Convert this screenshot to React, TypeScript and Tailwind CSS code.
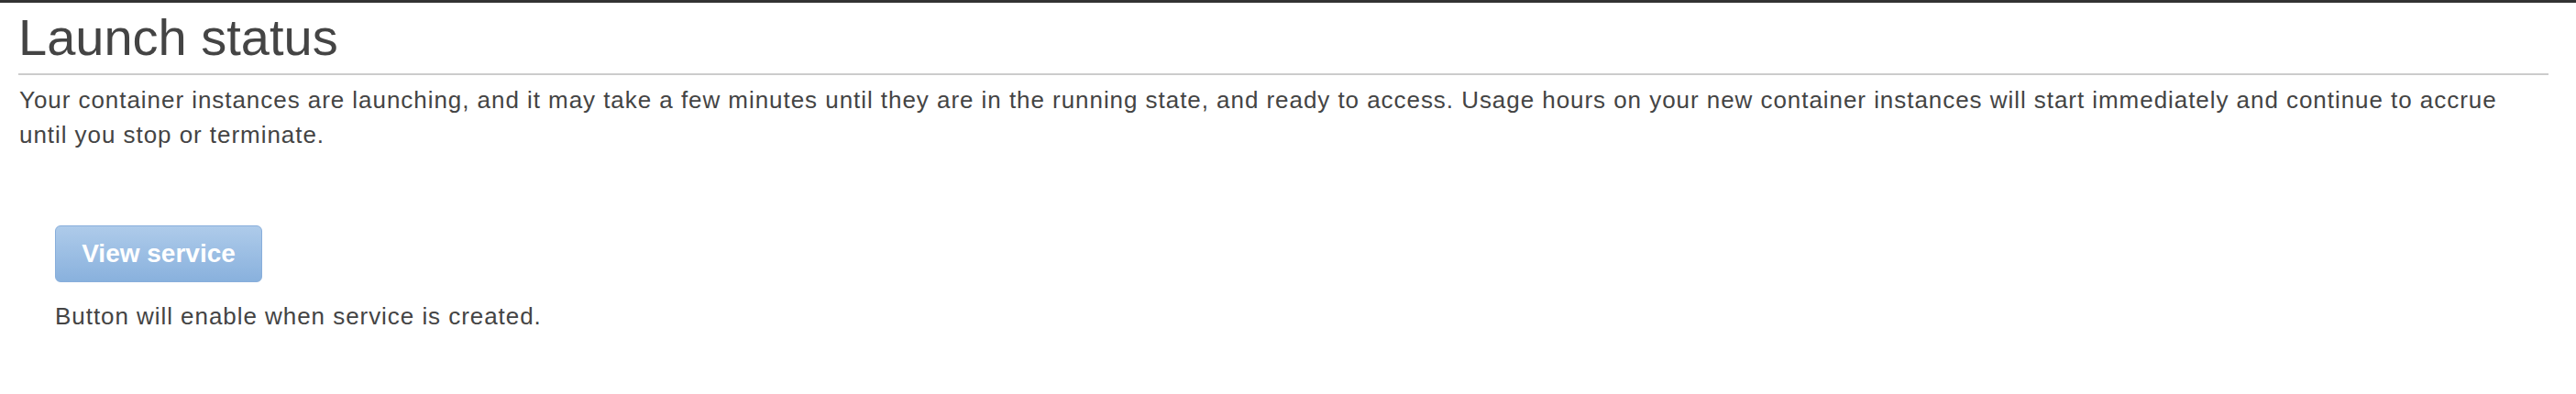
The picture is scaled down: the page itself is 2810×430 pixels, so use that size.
export default function App() {
  return (
    <div
      className="min-h-[430px] w-full bg-white border-t-[3px] border-[#333] text-[#444]"
      style={{ fontFamily: '"Liberation Sans", Arial, Helvetica, sans-serif' }}
    >
      <div className="pl-[20px] pr-[30px]">
        {/* Title */}
        <h1 className="mt-[7px] text-[56px] leading-[62px] font-normal">Launch status</h1>
        <div className="mt-[8px] h-[2px] bg-[#cccccc]" />

        {/* Description */}
        <p className="mt-[8px] mr-[30px] pl-[1px] text-[26px] leading-[38px] tracking-[0.95px]">
          Your container instances are launching, and it may take a few minutes until they are in the
          running state, and ready to access. Usage hours on your new container instances will start
          immediately and continue to accrue until you stop or terminate.
        </p>

        {/* Action */}
        <div className="mt-[80px] pl-[40px] flex flex-col items-start">
          <button
            disabled
            className="flex h-[62px] w-[226px] items-center justify-center rounded-[6px] border border-[#88aedb] bg-gradient-to-b from-[#aecbea] to-[#89b1dd] text-[28px] leading-[28px] font-bold text-white"
          >
            View service
          </button>
          <p className="mt-[18px] text-[26px] leading-[38px] tracking-[0.95px]">
            Button will enable when service is created.
          </p>
        </div>
      </div>
    </div>
  );
}
